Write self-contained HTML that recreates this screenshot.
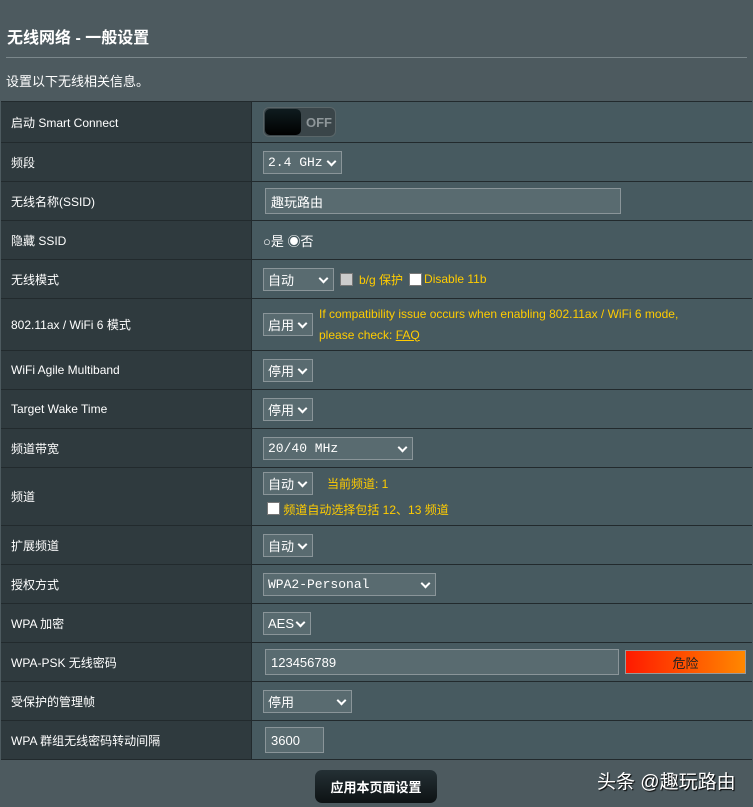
<!DOCTYPE html><html><head><meta charset="utf-8"><style>
body{margin:0;width:753px;height:807px;background:#4d5a5f;font-family:"Liberation Sans","Noto Sans CJK SC",sans-serif;color:#fff;position:relative;overflow:hidden;font-size:12px}
.a{position:absolute}
.h{left:7px;top:24px;font-size:16px;font-weight:bold}
.hr{left:6px;top:57px;width:741px;height:1px;background:#7b878b}
.row{position:absolute;left:1px;width:751px;border-top:1px solid #222a2d;background:#475a60;box-sizing:border-box}
.lab{position:absolute;left:0;top:0;bottom:0;width:251px;background:#2f3a3e;border-right:1px solid #222a2d;padding-left:10px;box-sizing:border-box;display:flex;align-items:center}
.v{position:absolute;left:262px;top:0;bottom:0;display:flex;align-items:center;gap:6px}
.sel{height:23px;border:1px solid #8a9599;background:#596b70;box-sizing:border-box;display:flex;align-items:center;padding-left:4px;font-size:13px;position:relative}
.sel:after{content:"";position:absolute;right:6px;top:6px;width:5px;height:5px;border-right:2px solid #fff;border-bottom:2px solid #fff;transform:rotate(45deg)}
.mono{font-family:"Liberation Mono",monospace}
.inp{height:26px;border:1px solid #8a9599;background:#596b70;box-sizing:border-box;display:flex;align-items:center;padding-left:5px;font-size:13px}
.y{color:#ffcc00}
.cb{width:11px;height:11px;background:#fff;border:1px solid #777;display:inline-block}
</style></head><body>
<div class="a h">无线网络 - 一般设置</div>
<div class="a hr"></div>
<div class="a" style="left:6px;top:71px;font-size:13px">设置以下无线相关信息。</div>
<div class="row" style="top:101px;height:41px"><div class="lab">启动 Smart Connect</div><div class="v"><div style="width:73px;height:30px;border-radius:6px;background:#3a4549;border:1px solid #5a6669;position:relative;box-sizing:border-box"><div style="position:absolute;left:1px;top:1px;width:36px;height:26px;border-radius:5px;background:linear-gradient(#0f1c1f,#000)"></div><div style="position:absolute;left:42px;top:7px;font-weight:bold;color:#8e9699;font-size:13px">OFF</div></div></div></div>
<div class="row" style="top:142px;height:39px"><div class="lab">频段</div><div class="v"><div class="sel mono" style="width:79px">2.4 GHz</div></div></div>
<div class="row" style="top:181px;height:39px"><div class="lab">无线名称(SSID)</div><div class="v"><div class="inp" style="width:356px;margin-left:2px">趣玩路由</div></div></div>
<div class="row" style="top:220px;height:39px"><div class="lab">隐藏 SSID</div><div class="v" style="gap:2px;font-size:13px">○是 ◉否</div></div>
<div class="row" style="top:259px;height:39px"><div class="lab">无线模式</div><div class="v"><div class="sel" style="width:71px">自动</div><span class="cb" style="background:#ccc"></span><span class="y">b/g 保护</span><span class="cb"></span><span class="y" style="margin-left:-4px">Disable 11b</span></div></div>
<div class="row" style="top:298px;height:52px"><div class="lab">802.11ax / WiFi 6 模式</div><div class="v"><div class="sel" style="width:50px">启用</div><div class="y" style="line-height:21px">If compatibility issue occurs when enabling 802.11ax / WiFi 6 mode,<br>please check: <u>FAQ</u></div></div></div>
<div class="row" style="top:350px;height:39px"><div class="lab">WiFi Agile Multiband</div><div class="v"><div class="sel" style="width:50px">停用</div></div></div>
<div class="row" style="top:389px;height:39px"><div class="lab">Target Wake Time</div><div class="v"><div class="sel" style="width:50px">停用</div></div></div>
<div class="row" style="top:428px;height:39px"><div class="lab">频道带宽</div><div class="v"><div class="sel mono" style="width:150px">20/40 MHz</div></div></div>
<div class="row" style="top:467px;height:58px"><div class="lab">频道</div><div class="a" style="left:262px;top:4px;display:flex;align-items:center;gap:14px"><div class="sel" style="width:50px">自动</div><span class="y">当前频道: 1</span></div><div class="a y" style="left:266px;top:33px"><span class="cb" style="vertical-align:-1px"></span> 频道自动选择包括 12、13 频道</div></div>
<div class="row" style="top:525px;height:39px"><div class="lab">扩展频道</div><div class="v"><div class="sel" style="width:50px">自动</div></div></div>
<div class="row" style="top:564px;height:39px"><div class="lab">授权方式</div><div class="v"><div class="sel mono" style="width:173px">WPA2-Personal</div></div></div>
<div class="row" style="top:603px;height:39px"><div class="lab">WPA 加密</div><div class="v"><div class="sel" style="width:48px">AES</div></div></div>
<div class="row" style="top:642px;height:39px"><div class="lab">WPA-PSK 无线密码</div><div class="v"><div class="inp" style="width:354px;margin-left:2px">123456789</div><div style="width:121px;height:24px;margin-left:0;background:linear-gradient(90deg,#ff1a00,#ff8800);border:1px solid #999;box-sizing:border-box;display:flex;align-items:center;justify-content:center;color:#222;font-size:13px">危险</div></div></div>
<div class="row" style="top:681px;height:39px"><div class="lab">受保护的管理帧</div><div class="v"><div class="sel" style="width:89px">停用</div></div></div>
<div class="row" style="top:720px;height:40px;border-bottom:1px solid #222a2d"><div class="lab">WPA 群组无线密码转动间隔</div><div class="v"><div class="inp" style="width:59px;margin-left:2px">3600</div></div></div>
<div class="a" style="left:315px;top:770px;width:122px;height:33px;border-radius:7px;background:linear-gradient(#243035,#0d1214);display:flex;align-items:center;justify-content:center;font-weight:bold;font-size:13px">应用本页面设置</div>
<div class="a" style="left:597px;top:767px;font-size:19px;text-shadow:1px 1px 1px #000">头条 @趣玩路由</div>
</body></html>
